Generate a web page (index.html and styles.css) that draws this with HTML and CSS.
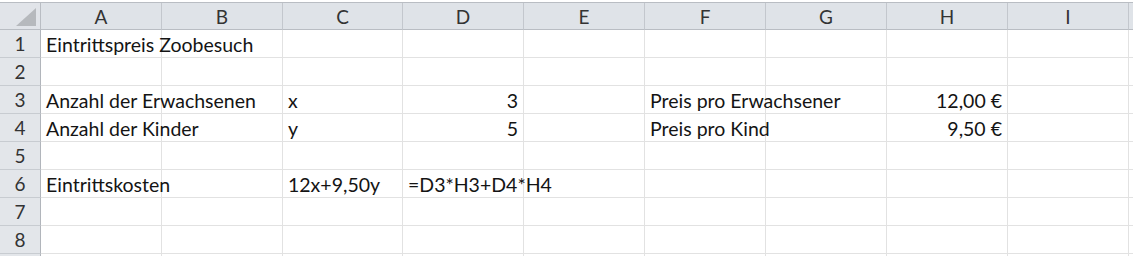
FILE: index.html
```html
<!DOCTYPE html>
<html lang="de">
<head>
    <meta charset="UTF-8">
    <meta name="viewport" content="width=device-width, initial-scale=1.0">
    <title>Eintrittspreis Zoobesuch</title>
    <link rel="stylesheet" href="styles.css">
</head>
<body>
    <div class="sheet">
        <!-- column headers -->
        <div class="corner"><span class="tri"></span></div>
        <div class="colhead">A</div>
        <div class="colhead">B</div>
        <div class="colhead">C</div>
        <div class="colhead">D</div>
        <div class="colhead">E</div>
        <div class="colhead">F</div>
        <div class="colhead">G</div>
        <div class="colhead">H</div>
        <div class="colhead">I</div>
        <div class="colhead rest"></div>

        <!-- row 1 -->
        <div class="rowhead">1</div>
        <div class="cell over">Eintrittspreis Zoobesuch</div>
        <div class="cell"></div><div class="cell"></div><div class="cell"></div><div class="cell"></div>
        <div class="cell"></div><div class="cell"></div><div class="cell"></div><div class="cell"></div>
        <div class="cell rest"></div>

        <!-- row 2 -->
        <div class="rowhead">2</div>
        <div class="cell"></div><div class="cell"></div><div class="cell"></div><div class="cell"></div><div class="cell"></div>
        <div class="cell"></div><div class="cell"></div><div class="cell"></div><div class="cell"></div>
        <div class="cell rest"></div>

        <!-- row 3 -->
        <div class="rowhead">3</div>
        <div class="cell over">Anzahl der Erwachsenen</div>
        <div class="cell"></div>
        <div class="cell">x</div>
        <div class="cell num">3</div>
        <div class="cell"></div>
        <div class="cell over">Preis pro Erwachsener</div>
        <div class="cell"></div>
        <div class="cell num">12,00 €</div>
        <div class="cell"></div>
        <div class="cell rest"></div>

        <!-- row 4 -->
        <div class="rowhead">4</div>
        <div class="cell over">Anzahl der Kinder</div>
        <div class="cell"></div>
        <div class="cell">y</div>
        <div class="cell num">5</div>
        <div class="cell"></div>
        <div class="cell over">Preis pro Kind</div>
        <div class="cell"></div>
        <div class="cell num">9,50 €</div>
        <div class="cell"></div>
        <div class="cell rest"></div>

        <!-- row 5 -->
        <div class="rowhead">5</div>
        <div class="cell"></div><div class="cell"></div><div class="cell"></div><div class="cell"></div><div class="cell"></div>
        <div class="cell"></div><div class="cell"></div><div class="cell"></div><div class="cell"></div>
        <div class="cell rest"></div>

        <!-- row 6 -->
        <div class="rowhead">6</div>
        <div class="cell over">Eintrittskosten</div>
        <div class="cell"></div>
        <div class="cell">12x+9,50y</div>
        <div class="cell over">=D3*H3+D4*H4</div>
        <div class="cell"></div>
        <div class="cell"></div><div class="cell"></div><div class="cell"></div><div class="cell"></div>
        <div class="cell rest"></div>

        <!-- row 7 -->
        <div class="rowhead">7</div>
        <div class="cell"></div><div class="cell"></div><div class="cell"></div><div class="cell"></div><div class="cell"></div>
        <div class="cell"></div><div class="cell"></div><div class="cell"></div><div class="cell"></div>
        <div class="cell rest"></div>

        <!-- row 8 -->
        <div class="rowhead">8</div>
        <div class="cell"></div><div class="cell"></div><div class="cell"></div><div class="cell"></div><div class="cell"></div>
        <div class="cell"></div><div class="cell"></div><div class="cell"></div><div class="cell"></div>
        <div class="cell rest"></div>

        <!-- row 9, only its top edge is visible -->
        <div class="rowhead"></div>
        <div class="cell"></div><div class="cell"></div><div class="cell"></div><div class="cell"></div><div class="cell"></div>
        <div class="cell"></div><div class="cell"></div><div class="cell"></div><div class="cell"></div>
        <div class="cell rest"></div>
    </div>
</body>
</html>
```

FILE: styles.css
```css
body{margin: 0;background-color: white;font-family: Lato, 'Noto Sans', sans-serif;color: #141414;overflow: hidden;height: 256px;}

        .sheet{
            margin-top: 2px;
            border-top: solid 1px #b9bdc3;
            display: grid;
            grid-template-columns: 41px 121px 121px 120px 121px 121px 121px 121px 121px 121px 1fr;
            grid-template-rows: 27px;
            grid-auto-rows: 28px;
            height: 253px;
            overflow: hidden;
        }
        .sheet > div{
            box-sizing: border-box;
            display: flex;
            align-items: center;
            white-space: nowrap;
        }
        .corner{
            background-color: #e1e4e9;
            border-right: solid 1px #b9bdc3;
            border-bottom: solid 1px #b9bdc3;
            position: relative;
        }
        .corner .tri{
            position: absolute;
            right: 4px;
            bottom: 3px;
            width: 0;
            height: 0;
            border-left: solid 20px transparent;
            border-bottom: solid 18px #b6b9bd;
        }
        .colhead{
            background-color: #dfe3e8;
            border-right: solid 1px #c3c7cd;
            border-bottom: solid 1px #b9bdc3;
            justify-content: center;
            font-size: 19px;
            color: #333;
        }
        .colhead.rest{
            border-right: none;
        }
        .rowhead{
            background-color: #e3e6ea;
            border-right: solid 1px #b1b5bb;
            border-bottom: solid 1px #c8ccd1;
            justify-content: center;
            font-size: 19px;
            color: #333;
        }
        .cell{
            border-right: solid 1px #e2e2e2;
            border-bottom: solid 1px #e2e2e2;
            padding: 1px 5px 0;
            font-size: 19.5px;
        }
        .cell.over{
            overflow: visible;
            position: relative;
            z-index: 1;
        }
        .cell.num{
            justify-content: flex-end;
        }
        .cell.rest{
            border-right: none;
            padding: 0;
        }
```
